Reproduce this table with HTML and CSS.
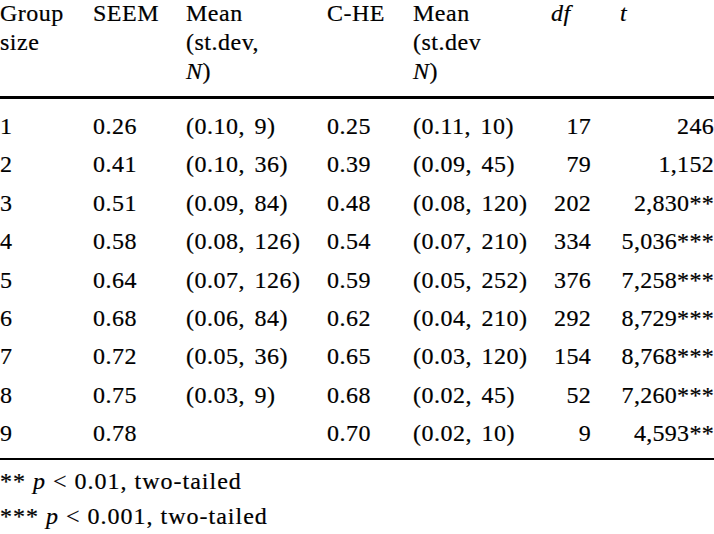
FILE: index.html
```html
<!DOCTYPE html>
<html lang="en">
<head>
<meta charset="utf-8">
<title>Group size table</title>
<link rel="stylesheet" href="styles.css">
</head>
<body>
<table class="data">
  <colgroup>
    <col class="c1"><col class="c2"><col class="c3"><col class="c4"><col class="c5"><col class="c6"><col class="c7">
  </colgroup>
  <thead>
    <tr>
      <th>Group<br>size</th>
      <th>SEEM</th>
      <th>Mean<br>(st.dev,<br><i>N</i>)</th>
      <th>C-HE</th>
      <th>Mean<br>(st.dev<br><i>N</i>)</th>
      <th><i>df</i></th>
      <th class="t-head"><i>t</i></th>
    </tr>
  </thead>
  <tbody>
    <tr><td>1</td><td>0.26</td><td>(0.10, 9)</td><td>0.25</td><td>(0.11, 10)</td><td class="num">17</td><td class="num">246</td></tr>
    <tr><td>2</td><td>0.41</td><td>(0.10, 36)</td><td>0.39</td><td>(0.09, 45)</td><td class="num">79</td><td class="num">1,152</td></tr>
    <tr><td>3</td><td>0.51</td><td>(0.09, 84)</td><td>0.48</td><td>(0.08, 120)</td><td class="num">202</td><td class="num">2,830**</td></tr>
    <tr><td>4</td><td>0.58</td><td>(0.08, 126)</td><td>0.54</td><td>(0.07, 210)</td><td class="num">334</td><td class="num">5,036***</td></tr>
    <tr><td>5</td><td>0.64</td><td>(0.07, 126)</td><td>0.59</td><td>(0.05, 252)</td><td class="num">376</td><td class="num">7,258***</td></tr>
    <tr><td>6</td><td>0.68</td><td>(0.06, 84)</td><td>0.62</td><td>(0.04, 210)</td><td class="num">292</td><td class="num">8,729***</td></tr>
    <tr><td>7</td><td>0.72</td><td>(0.05, 36)</td><td>0.65</td><td>(0.03, 120)</td><td class="num">154</td><td class="num">8,768***</td></tr>
    <tr><td>8</td><td>0.75</td><td>(0.03, 9)</td><td>0.68</td><td>(0.02, 45)</td><td class="num">52</td><td class="num">7,260***</td></tr>
    <tr><td>9</td><td>0.78</td><td></td><td>0.70</td><td>(0.02, 10)</td><td class="num">9</td><td class="num">4,593**</td></tr>
  </tbody>
</table>
<div class="notes">
  <p>** <i>p</i> &lt; 0.01, two-tailed</p>
  <p>*** <i>p</i> &lt; 0.001, two-tailed</p>
</div>
</body>
</html>
```

FILE: styles.css
```css
html, body {
  margin: 0;
  padding: 0;
  background: #ffffff;
}

body {
  font-family: "Liberation Serif", "Times New Roman", serif;
  font-size: 24px;
  color: #000000;
  width: 714px;
  -webkit-text-stroke: 0.2px #000000;
}

.data {
  width: 714px;
  border-collapse: collapse;
  table-layout: fixed;
  margin-top: -1px;
  letter-spacing: 0.5px;
  word-spacing: 3px;
}

.c1 { width: 93px; }
.c2 { width: 93px; }
.c3 { width: 141px; }
.c4 { width: 86px; }
.c5 { width: 138px; }
.c6 { width: 40px; }
.c7 { width: 123px; }

.data th {
  font-weight: normal;
  text-align: left;
  vertical-align: top;
  line-height: 29px;
  padding: 0 0 10px 0;
  border-bottom: 3px solid #000000;
  white-space: nowrap;
}

.data th.t-head {
  padding-left: 29px;
}

.data td {
  padding: 0;
  height: 38.4px;
  line-height: 38.4px;
  white-space: nowrap;
  vertical-align: top;
}

.data tbody tr:first-child td {
  padding-top: 8px;
}

.data tbody tr:last-child td {
  padding-bottom: 5.5px;
  border-bottom: 2px solid #000000;
}

.data td.num {
  text-align: right;
  letter-spacing: 0.3px;
}

.notes {
  margin-top: 4px;
  letter-spacing: 1px;
}

.notes p {
  margin: 0;
  line-height: 35px;
  white-space: nowrap;
}
```
